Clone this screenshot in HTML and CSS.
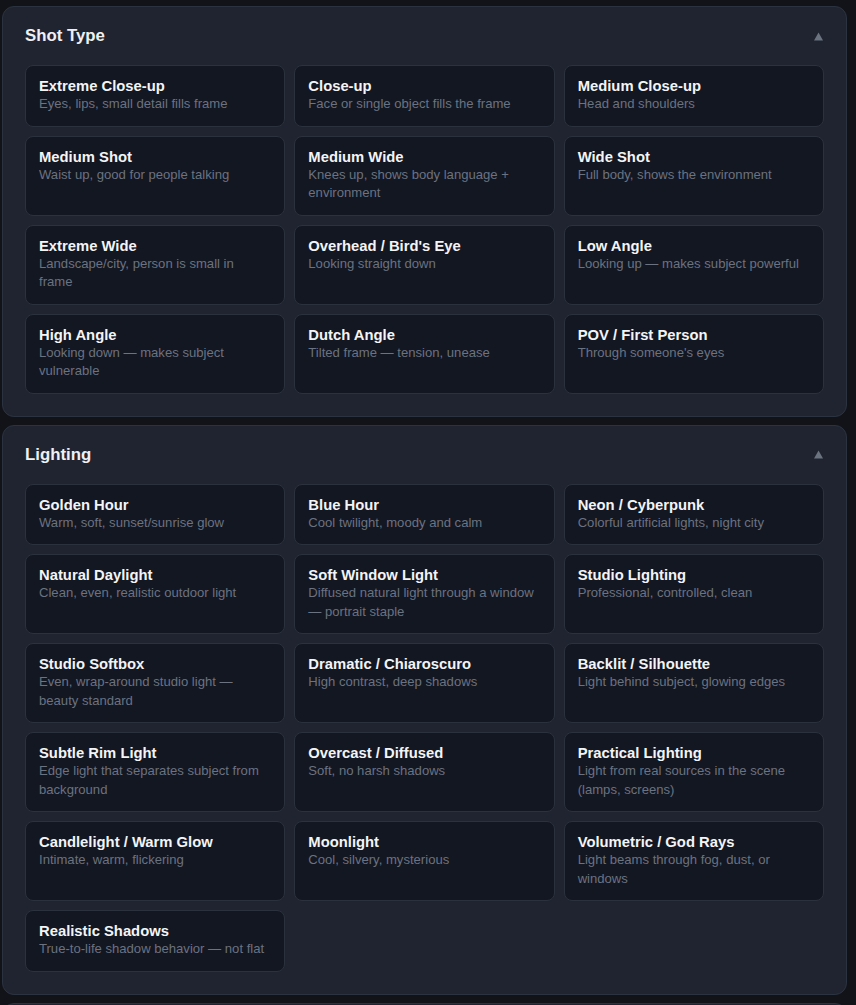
FILE: index.html
```html
<!DOCTYPE html>
<html lang="en">
<head>
<meta charset="utf-8">
<title>Shot options</title>
<link rel="stylesheet" href="styles.css">
</head>
<body>
<div class="page">
  <section class="panel">
    <header class="panel-head">
      <h2 class="panel-title">Shot Type</h2>
      <svg class="caret" width="9" height="9" viewBox="0 0 9 9"><polygon points="4.5,0.5 9,8.5 0,8.5" fill="currentColor"/></svg>
    </header>
    <div class="grid">
      <div class="card"><div class="card-title">Extreme Close-up</div><div class="card-desc">Eyes, lips, small detail fills frame</div></div>
      <div class="card"><div class="card-title">Close-up</div><div class="card-desc">Face or single object fills the frame</div></div>
      <div class="card"><div class="card-title">Medium Close-up</div><div class="card-desc">Head and shoulders</div></div>
      <div class="card"><div class="card-title">Medium Shot</div><div class="card-desc">Waist up, good for people talking</div></div>
      <div class="card"><div class="card-title">Medium Wide</div><div class="card-desc">Knees up, shows body language + environment</div></div>
      <div class="card"><div class="card-title">Wide Shot</div><div class="card-desc">Full body, shows the environment</div></div>
      <div class="card"><div class="card-title">Extreme Wide</div><div class="card-desc">Landscape/city, person is small in frame</div></div>
      <div class="card"><div class="card-title">Overhead / Bird's Eye</div><div class="card-desc">Looking straight down</div></div>
      <div class="card"><div class="card-title">Low Angle</div><div class="card-desc">Looking up — makes subject powerful</div></div>
      <div class="card"><div class="card-title">High Angle</div><div class="card-desc">Looking down — makes subject vulnerable</div></div>
      <div class="card"><div class="card-title">Dutch Angle</div><div class="card-desc">Tilted frame — tension, unease</div></div>
      <div class="card"><div class="card-title">POV / First Person</div><div class="card-desc">Through someone's eyes</div></div>
    </div>
  </section>

  <section class="panel">
    <header class="panel-head">
      <h2 class="panel-title">Lighting</h2>
      <svg class="caret" width="9" height="9" viewBox="0 0 9 9"><polygon points="4.5,0.5 9,8.5 0,8.5" fill="currentColor"/></svg>
    </header>
    <div class="grid">
      <div class="card"><div class="card-title">Golden Hour</div><div class="card-desc">Warm, soft, sunset/sunrise glow</div></div>
      <div class="card"><div class="card-title">Blue Hour</div><div class="card-desc">Cool twilight, moody and calm</div></div>
      <div class="card"><div class="card-title">Neon / Cyberpunk</div><div class="card-desc">Colorful artificial lights, night city</div></div>
      <div class="card"><div class="card-title">Natural Daylight</div><div class="card-desc">Clean, even, realistic outdoor light</div></div>
      <div class="card"><div class="card-title">Soft Window Light</div><div class="card-desc">Diffused natural light through a window — portrait staple</div></div>
      <div class="card"><div class="card-title">Studio Lighting</div><div class="card-desc">Professional, controlled, clean</div></div>
      <div class="card"><div class="card-title">Studio Softbox</div><div class="card-desc">Even, wrap-around studio light — beauty standard</div></div>
      <div class="card"><div class="card-title">Dramatic / Chiaroscuro</div><div class="card-desc">High contrast, deep shadows</div></div>
      <div class="card"><div class="card-title">Backlit / Silhouette</div><div class="card-desc">Light behind subject, glowing edges</div></div>
      <div class="card"><div class="card-title">Subtle Rim Light</div><div class="card-desc">Edge light that separates subject from background</div></div>
      <div class="card"><div class="card-title">Overcast / Diffused</div><div class="card-desc">Soft, no harsh shadows</div></div>
      <div class="card"><div class="card-title">Practical Lighting</div><div class="card-desc">Light from real sources in the scene (lamps, screens)</div></div>
      <div class="card"><div class="card-title">Candlelight / Warm Glow</div><div class="card-desc">Intimate, warm, flickering</div></div>
      <div class="card"><div class="card-title">Moonlight</div><div class="card-desc">Cool, silvery, mysterious</div></div>
      <div class="card"><div class="card-title">Volumetric / God Rays</div><div class="card-desc">Light beams through fog, dust, or windows</div></div>
      <div class="card"><div class="card-title">Realistic Shadows</div><div class="card-desc">True-to-life shadow behavior — not flat</div></div>
    </div>
  </section>

  <section class="panel panel-stub"></section>
</div>
</body>
</html>
```

FILE: styles.css
```css
* { box-sizing: border-box; }

html, body {
  margin: 0;
  padding: 0;
  background: #111318;
  overflow: hidden;
}

body {
  font-family: "Liberation Sans", Arial, Helvetica, sans-serif;
  color: #e5e7eb;
}

.page {
  width: 845px;
  height: 1005px;
  overflow: hidden;
  margin-left: 2px;
  padding-top: 6px;
  display: flex;
  flex-direction: column;
  gap: 8px;
}

.panel {
  flex: none;
  background: #1f2430;
  border: 1px solid #2c3340;
  border-radius: 12px;
  padding: 18px 22px 22px;
}

.panel-head {
  display: flex;
  align-items: center;
  justify-content: space-between;
  height: 20px;
  margin-bottom: 20px;
}

.panel-title {
  margin: 0;
  font-size: 16.8px;
  font-weight: 700;
  line-height: 20px;
  color: #eef0f3;
  position: relative;
  top: 1px;
}

.caret {
  color: #6b7280;
  margin-right: 1px;
  margin-top: 2px;
}

.grid {
  display: grid;
  grid-template-columns: repeat(3, 1fr);
  column-gap: 9px;
  row-gap: 9px;
}

.card {
  background: #131722;
  border: 1px solid #2b313d;
  border-radius: 8px;
  padding: 11px 16px 12px 13px;
}

.card-title {
  font-size: 14.8px;
  font-weight: 700;
  line-height: 18px;
  color: #f3f4f6;
}

.card-desc {
  font-size: 13.1px;
  line-height: 18.5px;
  color: #6b7280;
}

.panel-stub {
  height: 60px;
}
```
